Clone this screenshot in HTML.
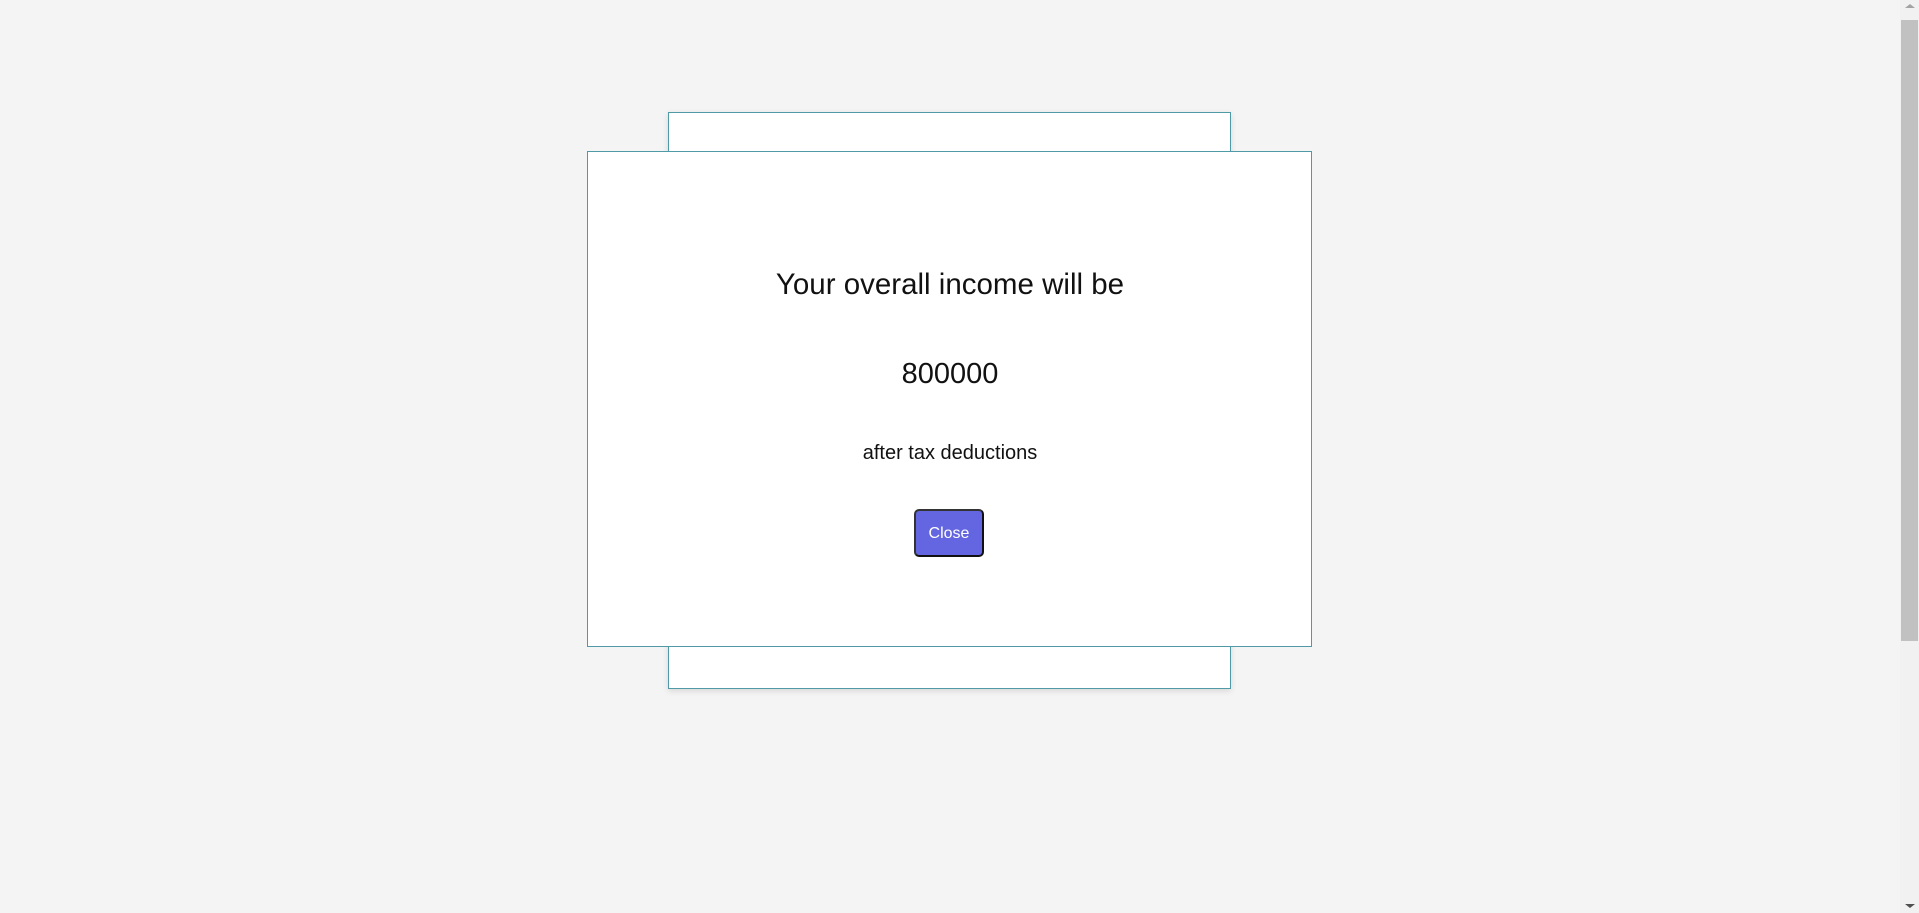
<!DOCTYPE html>
<html><head><style>
html,body{margin:0;padding:0;}
body{width:1919px;height:913px;background:#f4f4f4;position:relative;overflow:hidden;font-family:"Liberation Sans",sans-serif;}
.back{position:absolute;left:668px;top:112px;width:561px;height:575px;background:#fff;border:1px solid #4f9aa6;box-shadow:0 2px 6px rgba(0,0,0,0.12);}
.front{position:absolute;left:587px;top:151px;width:723px;height:494px;background:#fff;border:1px solid #4f9aa6;}
.t{position:absolute;left:0;width:1900px;text-align:center;color:#111;}
.btn{position:absolute;left:914px;top:509px;width:70px;height:48px;box-sizing:border-box;background:#6366e0;border:2px solid #333;border-right-color:#111;border-bottom-color:#111;border-radius:5px;color:#fff;font-size:16px;line-height:46px;text-align:center;}
.sb{position:absolute;left:1900px;top:0;width:19px;height:913px;background:#f1f1f1;}
.thumb{position:absolute;left:1901px;top:20px;width:17px;height:621px;background:#c1c1c1;}
</style></head><body>
<div class="back"></div>
<div class="front"></div>
<div class="t" style="top:266px;font-size:29.5px;line-height:38px;">Your overall income will be</div>
<div class="t" style="top:355px;font-size:29px;line-height:38px;">800000</div>
<div class="t" style="top:440px;font-size:20px;line-height:26px;">after tax deductions</div>
<div class="btn">Close</div>
<div class="sb"></div>
<div class="thumb"></div>
<div style="position:absolute;left:1905px;top:4px;width:0;height:0;border-left:5px solid transparent;border-right:5px solid transparent;border-bottom:4px solid #a3a3a3;"></div>
<div style="position:absolute;left:1905px;top:904px;width:0;height:0;border-left:5px solid transparent;border-right:5px solid transparent;border-top:4px solid #505050;"></div>
</body></html>
